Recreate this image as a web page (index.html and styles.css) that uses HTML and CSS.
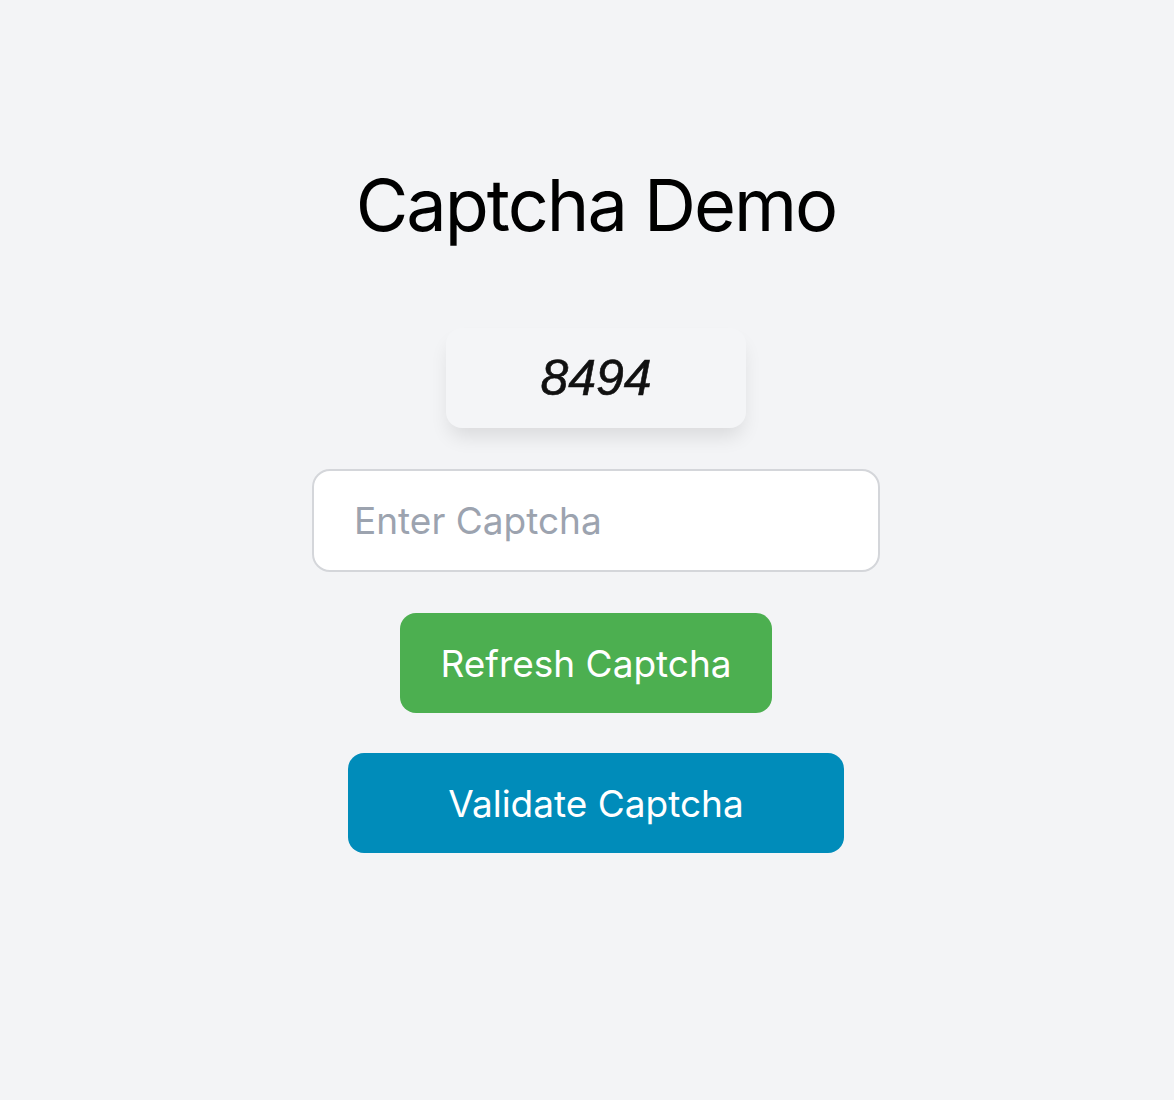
FILE: index.html
```html
<!DOCTYPE html>
<html lang="en">
<head>
<meta charset="utf-8">
<title>Captcha Demo</title>
<link rel="stylesheet" href="styles.css">
</head>
<body>
<main class="page">
  <h1 class="title">Captcha Demo</h1>
  <div class="captcha-box"><span class="captcha-code">8494</span></div>
  <input class="captcha-input" type="text" placeholder="Enter Captcha">
  <button class="btn btn-refresh" type="button">Refresh Captcha</button>
  <button class="btn btn-validate" type="button">Validate Captcha</button>
</main>
</body>
</html>
```

FILE: styles.css
```css
html, body {
  margin: 0;
  padding: 0;
  background: #f3f4f6;
}

body {
  font-family: Inter, "Noto Sans", "Liberation Sans", sans-serif;
  color: #000;
}

.page {
  display: flex;
  flex-direction: column;
  align-items: center;
  padding-top: 163px;
  padding-left: 18px;
}

.title {
  margin: 0;
  font-size: 72px;
  font-weight: 400;
  line-height: 84px;
  letter-spacing: -2px;
}

.captcha-box {
  margin-top: 81px;
  width: 300px;
  height: 100px;
  border-radius: 16px;
  background: #f4f5f7;
  box-shadow: 0 12px 20px -4px rgba(0, 0, 0, 0.11);
  display: flex;
  align-items: center;
  justify-content: center;
}

.captcha-code {
  display: inline-block;
  font-family: "Liberation Sans", Arial, sans-serif;
  font-style: italic;
  font-size: 50px;
  line-height: 1;
  color: #111;
  -webkit-text-stroke: 0.6px #111;
  filter: blur(0.5px);
}

.captcha-input {
  margin-top: 41px;
  width: 568px;
  height: 103px;
  box-sizing: border-box;
  border: 2px solid #d4d6da;
  border-radius: 18px;
  background: #fff;
  padding: 0 40px;
  font-family: inherit;
  font-size: 37px;
  color: #111;
  outline: none;
}

.captcha-input::placeholder {
  color: #9ca3af;
}

.btn {
  height: 100px;
  border: none;
  border-radius: 16px;
  color: #fff;
  font-family: inherit;
  font-size: 37px;
  cursor: pointer;
  padding: 0;
}

.btn-refresh {
  margin-top: 41px;
  margin-right: 20px;
  width: 372px;
  background: #4caf50;
}

.btn-validate {
  margin-top: 40px;
  width: 496px;
  background: #008cba;
}
```
